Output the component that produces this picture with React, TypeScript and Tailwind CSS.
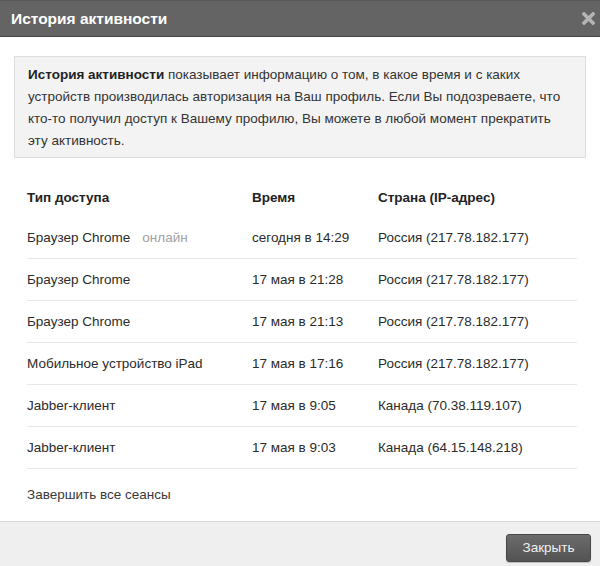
const sessions = [
  { kind: "Браузер Chrome", online: true, time: "сегодня в 14:29", place: "Россия (217.78.182.177)" },
  { kind: "Браузер Chrome", time: "17 мая в 21:28", place: "Россия (217.78.182.177)" },
  { kind: "Браузер Chrome", time: "17 мая в 21:13", place: "Россия (217.78.182.177)" },
  { kind: "Мобильное устройство iPad", time: "17 мая в 17:16", place: "Россия (217.78.182.177)" },
  { kind: "Jabber-клиент", time: "17 мая в 9:05", place: "Канада (70.38.119.107)" },
  { kind: "Jabber-клиент", time: "17 мая в 9:03", place: "Канада (64.15.148.218)" },
];

function CloseIcon() {
  return (
    <svg width="13" height="13" viewBox="0 0 13 13" aria-hidden>
      <path d="M2 2 L11 11 M11 2 L2 11" stroke="#b4b4b4" strokeWidth="3.6" strokeLinecap="square" />
    </svg>
  );
}

export default function App() {
  return (
    <div className="flex h-[566px] w-[600px] flex-col overflow-hidden bg-white font-['Liberation_Sans',Arial,sans-serif] text-[13.5px] text-[#2b2b2b]">
      <header className="flex h-[37px] shrink-0 items-center justify-between border-t border-b border-t-[#575757] border-b-[#444] bg-[#646464] pl-[11px] pr-[5px]">
        <h1 className="text-[15.5px] font-bold text-white">История активности</h1>
        <CloseIcon />
      </header>

      <div className="px-[14px] pt-[19px]">
        {/* intro note, wrapped as in the original dialog */}
        <div className="h-[102px] border border-[#dedede] bg-[#f3f3f3] px-[13px] pt-[7px] leading-[22px] text-[#333]">
          <b className="text-[#222]">История активности</b> показывает информацию о том, в какое время и с каких
          <br />
          устройств производилась авторизация на Ваш профиль. Если Вы подозреваете, что
          <br />
          кто-то получил доступ к Вашему профилю, Вы можете в любой момент прекратить
          <br />
          эту активность.
        </div>
      </div>

      <div className="ml-[27px] mt-[18px] w-[550px]">
        <div className="grid h-[41px] grid-cols-[225px_126px_1fr] items-center pt-[3px] font-bold text-[#222]">
          <span>Тип доступа</span>
          <span>Время</span>
          <span>Страна (IP-адрес)</span>
        </div>
        {sessions.map((s, i) => (
          <div
            key={i}
            className="grid h-[42px] grid-cols-[225px_126px_1fr] items-center border-b border-[#e8e8e8] pt-[1px]"
          >
            <span>
              {s.kind}
              {s.online && <span className="ml-[12px] text-[#a0a0a0]">онлайн</span>}
            </span>
            <span>{s.time}</span>
            <span>{s.place}</span>
          </div>
        ))}
        <div className="flex h-[52px] items-center text-[#3a3a3a]">Завершить все сеансы</div>
      </div>

      <footer className="flex flex-1 justify-end border-t border-[#d9d9d9] bg-[#efefef] pr-[9px] pt-[12px]">
        <button
          type="button"
          className="h-[28px] w-[85px] rounded-[3px] border border-[#474747] bg-gradient-to-b from-[#6c6c6c] to-[#535353] text-[13.5px] text-[#f0f0f0] shadow-[0_1px_1px_rgba(0,0,0,0.2)]"
        >
          Закрыть
        </button>
      </footer>
    </div>
  );
}
